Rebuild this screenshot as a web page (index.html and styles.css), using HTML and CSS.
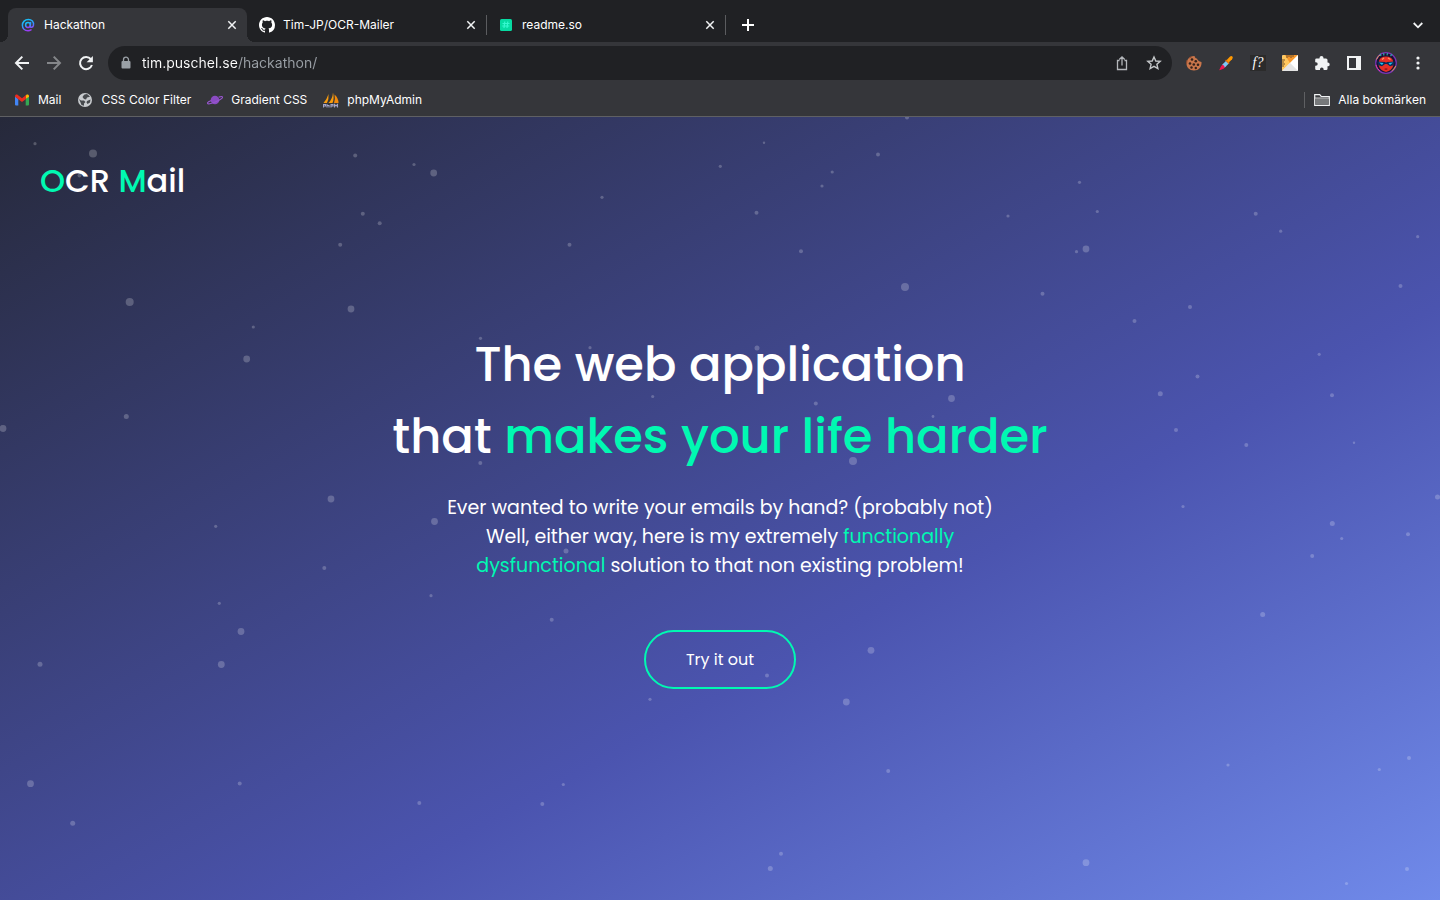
FILE: index.html
```html
<!DOCTYPE html>
<html lang="en">
<head>
<meta charset="utf-8">
<meta name="viewport" content="width=device-width, initial-scale=1">
<title>Hackathon</title>
<link rel="stylesheet" href="styles.css">
</head>
<body>
<div class="browser">
  <div class="tabstrip">
    <div class="tab tab-active">
      <svg class="icon" viewBox="0 0 16 16" fill="none" stroke="url(#at)" stroke-width="1.5" stroke-linecap="round"><defs><linearGradient id="at" x1="0" y1="0" x2="0.4" y2="1"><stop offset="0" stop-color="#12c8f4"/><stop offset=".6" stop-color="#2e9bff"/><stop offset="1" stop-color="#9b3cf5"/></linearGradient></defs><circle cx="8" cy="8" r="2.4"/><path d="M10.6 5.6 10.2 9.3c-.1 1.400 2.600 1.500 3.200-.8C14.200 4.800 11.600 2.400 8.300 2.400 5 2.400 2.400 5 2.400 8.200c0 3.200 2.400 5.500 5.600 5.500 1.200 0 2.200-.3 3-.8"/></svg>
      <span class="tab-title">Hackathon</span>
      <button class="tab-close" aria-label="Close Hackathon"><svg viewBox="0 0 16 16" fill="none" stroke="#f1f3f4" stroke-width="1.500"><path d="m4.300 4.300 7.400 7.400m0-7.400-7.400 7.400"/></svg></button>
    </div>
    <div class="tab tab-divided">
      <svg class="icon" viewBox="0 0 16 16" fill="#fff"><path d="M8 0C3.580 0 0 3.580 0 8c0 3.540 2.290 6.530 5.470 7.590.4.070.550-.170.550-.380 0-.190-.010-.820-.010-1.490-2.010.370-2.530-.490-2.690-.940-.090-.230-.480-.940-.820-1.130-.280-.150-.680-.520-.010-.530.630-.010 1.080.580 1.230.820.720 1.210 1.870.870 2.330.660.070-.520.280-.870.510-1.070-1.780-.2-3.640-.890-3.640-3.950 0-.870.310-1.590.820-2.150-.080-.2-.360-1.020.080-2.120 0 0 .670-.210 2.200.820.640-.180 1.320-.270 2-.270s1.360.090 2 .270c1.530-1.040 2.200-.820 2.200-.820.440 1.100.160 1.920.080 2.120.510.560.820 1.270.820 2.150 0 3.070-1.870 3.750-3.650 3.950.290.250.540.730.540 1.480 0 1.070-.010 1.930-.010 2.200 0 .210.150.460.550.380A8.010 8.010 0 0 0 16 8c0-4.420-3.580-8-8-8z"/></svg>
      <span class="tab-title">Tim-JP/OCR-Mailer</span>
      <button class="tab-close" aria-label="Close Tim-JP/OCR-Mailer"><svg viewBox="0 0 16 16" fill="none" stroke="#f1f3f4" stroke-width="1.500"><path d="m4.300 4.300 7.400 7.400m0-7.400-7.400 7.400"/></svg></button>
    </div>
    <div class="tab tab-divided">
      <svg class="icon" viewBox="0 0 16 16" fill="none"><rect x="2" y="2" width="12" height="12" rx="1.500" fill="#06dba2"/><path d="M6.800 4.500 6 11m3.800-6.500L9 11M4.500 6.500h7M4.200 9h7" stroke="#35f8cf" stroke-width="1.200"/></svg>
      <span class="tab-title">readme.so</span>
      <button class="tab-close" aria-label="Close readme.so"><svg viewBox="0 0 16 16" fill="none" stroke="#f1f3f4" stroke-width="1.500"><path d="m4.300 4.300 7.400 7.400m0-7.400-7.400 7.400"/></svg></button>
    </div>
    <button class="tool" aria-label="New tab"><svg class="icon" viewBox="0 0 16 16" fill="none" stroke="#fff" stroke-width="2"><path d="M8 2v12M2 8h12"/></svg></button>
    <button class="tool tab-search" aria-label="Search tabs"><svg class="icon" viewBox="0 0 16 16" fill="none" stroke="#f1f3f4" stroke-width="1.800"><path d="m3.700 6 4.300 4.300L12.300 6"/></svg></button>
  </div>

  <div class="toolbar">
    <div class="group">
      <button class="tool" aria-label="Back"><svg class="icon" viewBox="0 0 16 16" fill="none" stroke="#f1f3f4" stroke-width="2"><path d="M15 8H2.500M8.300 1.600 2 8l6.300 6.400"/></svg></button>
      <button class="tool" aria-label="Forward"><svg class="icon" viewBox="0 0 16 16" fill="none" stroke="#85878a" stroke-width="2"><path d="M1 8h12.500M7.700 1.600 14 8l-6.300 6.400"/></svg></button>
      <button class="tool" aria-label="Reload"><svg class="icon" viewBox="0 0 16 16" fill="none" stroke="#f1f3f4" stroke-width="2"><path d="M12.900 4.200A6.100 6.100 0 1 0 13.900 10"/><path d="M14.900.9v6.300H8.600z" fill="#f1f3f4" stroke="none"/></svg></button>
    </div>
    <div class="omnibox">
      <svg class="icon" viewBox="0 0 16 16"><rect x="3.500" y="6" width="9" height="7.500" rx="1" fill="#9aa0a6"/><path d="M5.500 6.500V4.700a2.500 2.500 0 0 1 5 0v1.800" fill="none" stroke="#9aa0a6" stroke-width="1.300"/></svg>
      <input class="url" type="text" aria-label="Address" value="tim.puschel.se/hackathon/">
      <button class="tool" aria-label="Share"><svg class="icon" viewBox="0 0 16 16" fill="none" stroke="#b4b7bb" stroke-width="1.300"><path d="M5.500 5.500h-2v9h9v-9h-2M8 10.500V2M5.300 4.500 8 1.800l2.700 2.700"/></svg></button>
      <button class="tool" aria-label="Bookmark this page"><svg class="icon" viewBox="0 0 16 16" fill="none" stroke="#c4c7c9" stroke-width="1.400"><path d="m8 2 1.800 4 4.400.4-3.300 2.900 1 4.300L8 11.300l-3.900 2.300 1-4.300L1.800 6.400 6.200 6z"/></svg></button>
    </div>
    <div class="group">
      <button class="tool" aria-label="Cookie editor"><svg class="icon" viewBox="0 0 16 16"><path d="M8.500 1C9 3 10 3.500 11 3.500c.5 2 2 3 4.500 3.500C16 12 12.500 15.500 8 15.500S.5 12.500.5 8.500 4 .8 8.500 1z" fill="#c9764b"/><path d="m1 5-.5 4M6 1.500 3 3" stroke="#8e4a2e"/><g fill="#33221c"><circle cx="6" cy="4.500" r="1.300"/><circle cx="9.800" cy="6.300" r="1.300"/><circle cx="4" cy="8.500" r="1.300"/><circle cx="7.800" cy="9.500" r="1.300"/><circle cx="12" cy="9.700" r="1.300"/><circle cx="5.500" cy="12.500" r="1.200"/><circle cx="9.800" cy="13" r="1.200"/></g></svg></button>
      <button class="tool" aria-label="Color picker"><svg class="icon" viewBox="0 0 16 16"><path d="M1.300 14.900 3 11.200l2.500-2.700 2.800 2.700-2.800 2.500-4 1.500z" fill="#f0174f"/><path d="m4.200 9.800 4.500-4.500 2.600 2.600-4.500 4.500q-.3-2.300-2.600-2.600z" fill="#7cc7f4"/><path d="m8.300 5.500 3.500-3.700q1.500-1.300 2.600-.2 1 1.100-.3 2.600L10.500 7.800z" fill="#ff9800"/><path d="m7.600 5 3.500 3.500" stroke="#e66e05" stroke-width="1.300"/></svg></button>
      <button class="tool" aria-label="Font finder"><span class="font-finder">f?</span></button>
      <button class="tool" aria-label="Page ruler"><svg class="icon" viewBox="0 0 16 16"><rect width="16" height="16" rx="1.500" fill="#f3f3f3"/><path d="M0 1.500Q0 0 1.500 0H16L0 16z" fill="#ffc75f"/><path d="M3 0h13L8 8z" fill="#f7972b"/><path d="M8 8 16 0v16z" fill="#fff"/><path d="M0 16 8 8l8 8z" fill="#e4e4e4"/><path d="M5 0v3m2-3v2m2-2v3m2-3v2M0 5h3M0 7h2M0 9h3M0 11h2" stroke="#70512b"/></svg></button>
      <button class="tool" aria-label="Extensions"><svg class="icon" viewBox="0 0 16 16" fill="#f1f3f4"><path d="M2.500 3.500h3V3a2 2 0 0 1 4 0v.5h2.500A1.500 1.500 0 0 1 13.500 5v2.500h.3a1.900 1.900 0 0 1 0 3.800h-.3v2.400a1.300 1.300 0 0 1-1.300 1.300H9.600v-.7a1.800 1.800 0 0 0-3.600 0v.7H2.500A1.300 1.300 0 0 1 1.200 13.700v-2.900h.7a1.800 1.800 0 0 0 0-3.600h-.7V4.800a1.300 1.300 0 0 1 1.300-1.300z"/></svg></button>
      <button class="tool" aria-label="Side panel"><svg class="icon" viewBox="0 0 16 16"><path fill="#f1f3f4" fill-rule="evenodd" d="M1 1h14v14H1zM3 3v10h7V3z"/></svg></button>
      <button class="tool" aria-label="Profile"><svg class="avatar" viewBox="0 0 22 22"><circle cx="11" cy="11" r="10.300" fill="#191332" stroke="#7a35b5" stroke-width="1.200"/><path d="M1.500 7.500A10 10 0 0 1 6 2.200M20.600 14a10 10 0 0 1-4 5" fill="none" stroke="#e3a04c"/><path d="M1 13a10 10 0 0 0 4 6" fill="none" stroke="#e53c9e"/><path d="M4 9Q5 4.500 11 4.500T18 9l.5 4Q17 18.500 11 20 5 18.500 3.500 13z" fill="#e72f26"/><path d="M6 4 5 1.800m4 1.700-.5-2.300m3.500 2.200.5-2.400m3 3L17 2.200" stroke="#2aa5a9" stroke-width="1.200"/><path d="M7 7.500 9 6m4 0 2.500 1.500" fill="none" stroke="#ff9a62" stroke-width="1.300"/><path d="M2 9.500 10 10l1 .7 1-.7 8-.5-1.500 3.700-3.500 1-3-2.200h-2l-3 2.200-3.500-1z" fill="#092c59"/><path d="m4 10.500 4.500.5-1.500 2zm14 0-4.500.5 1.500 2z" fill="#25c4f3"/><path d="m9 17 2-.7 2 .7-2 1z" fill="#80121e"/></svg></button>
      <button class="tool" aria-label="Menu"><svg class="icon" viewBox="0 0 16 16" fill="#f1f3f4"><circle cx="8" cy="3" r="1.600"/><circle cx="8" cy="8" r="1.600"/><circle cx="8" cy="13" r="1.600"/></svg></button>
    </div>
  </div>

  <nav class="bookmarks" aria-label="Bookmarks">
    <a class="bookmark" href="#"><svg class="icon" viewBox="0 0 16 16"><path d="M1 4.500 4.300 7v6.500H2a1 1 0 0 1-1-1z" fill="#4285f4"/><path d="M15 4.500 11.700 7v6.500H14a1 1 0 0 0 1-1z" fill="#34a853"/><path d="M11.700 3.500V7L15 4.700v-.5c0-1.600-1.700-2.300-2.800-1.300z" fill="#fbbc04"/><path d="M1 4.700v-.5c0-1.600 1.700-2.300 2.800-1.300L8 6.200l4.200-3.300-.5 4.300L8 10 1 4.700z" fill="#ea2d20"/></svg>Mail</a>
    <a class="bookmark" href="#"><svg class="icon" viewBox="0 0 16 16"><circle cx="8" cy="8" r="7" fill="#c8cbce"/><path d="M7.500 2.500 10 2l3 2.500-1 .5-2 .5-1 2-2-.5L5.500 5l1-1.500zM2 7l2 1.500h3L8.500 10 7 11.500v2.300L4.500 13l-1-2.500zM10 9l3.500-1.500-.5 3-2.500 1.500-1-1.500z" fill="#46494d"/></svg>CSS Color Filter</a>
    <a class="bookmark" href="#"><svg class="icon" viewBox="0 0 16 16"><circle cx="8" cy="8" r="4.300" fill="#8a4bc2"/><path d="M4.300 8.500C1.800 9.500.2 10.500.5 11.300c.5.900 4.500.1 8.300-1.500s7-3.800 6.700-4.800c-.3-.7-2-.4-3.800.1" fill="none" stroke="#9856d0" stroke-width="1.200"/></svg>Gradient CSS</a>
    <a class="bookmark" href="#"><svg class="icon" viewBox="0 0 16 16"><path d="M5.500 2Q6 7 4 11H.5Q4 7 5.500 2zM10 .5q1.500 6-.5 10.500H5.500Q9.500 7 10 .5z" fill="#f89c0e"/><path d="M11.500 2.500Q15.500 6 15.500 11H11q1.500-4 .5-8.500z" fill="#f28a0b"/><path d="M.5 15.500v-3h2v1.500H1M4 12v3.500m0-2h2v2M8 15.500v-3h2v1.500H8.500m3 1.500v-3l1.500 1.500 1.500-1.500v3" fill="none" stroke="#a3a4c7" stroke-width="1.100"/></svg>phpMyAdmin</a>
    <a class="bookmark all-bookmarks" href="#"><svg class="icon" viewBox="0 0 16 16"><path d="M.7 13.300V2.700h5l1.500 1.800h8.100v8.800z" fill="#3a3b3e" stroke="#f1f3f4" stroke-width="1.200"/><path d="M1.300 6.400h13.400v6.300H1.300z" fill="#77797b"/><path d="M.7 6h14.600" stroke="#f1f3f4" stroke-width=".8"/></svg>Alla bokmärken</a>
  </nav>
</div>

<main class="page">
  <svg class="particles" viewBox="0 117 1440 783" preserveAspectRatio="xMidYMin slice" aria-hidden="true">
    <g>
      <circle cx="93" cy="153.500" r="4"/><circle cx="129.700" cy="302" r="4"/><circle cx="905" cy="287" r="4"/><circle cx="853" cy="461" r="4"/>
      <circle cx="433.700" cy="173" r="3.400"/><circle cx="351" cy="309" r="3.400"/><circle cx="246.700" cy="359" r="3.400"/><circle cx="1086" cy="249" r="3.400"/><circle cx="3" cy="428.500" r="3.400"/><circle cx="331" cy="499" r="3.400"/><circle cx="434.500" cy="521.500" r="3.400"/><circle cx="241" cy="631.500" r="3.400"/><circle cx="221.300" cy="664.500" r="3.400"/><circle cx="30.500" cy="783.700" r="3.400"/><circle cx="951.500" cy="398.500" r="3.400"/><circle cx="871" cy="650.300" r="3.400"/><circle cx="846.300" cy="702" r="3.400"/><circle cx="1086" cy="862.700" r="3.400"/>
      <circle cx="40" cy="664.300" r="2.500"/><circle cx="72.700" cy="823.300" r="2.500"/><circle cx="1160.300" cy="393.700" r="2.500"/><circle cx="1332.300" cy="523.500" r="2.500"/><circle cx="1262.700" cy="614.500" r="2.500"/><circle cx="770.300" cy="868.500" r="2.500"/><circle cx="757" cy="348" r="2.500"/><circle cx="126.300" cy="416.500" r="2.500"/><circle cx="1437.500" cy="497" r="2.500"/><circle cx="566" cy="551" r="2.500"/><circle cx="79.500" cy="175.500" r="2"/>
      <circle cx="355.200" cy="155.500" r="2"/><circle cx="362.800" cy="213.800" r="2"/><circle cx="379.700" cy="223.200" r="2"/><circle cx="340.200" cy="244.800" r="2"/><circle cx="569.500" cy="244.800" r="2"/><circle cx="756.500" cy="212.800" r="2"/><circle cx="878" cy="154.500" r="2"/><circle cx="801" cy="251.300" r="2"/><circle cx="907" cy="117.500" r="2"/><circle cx="1255.700" cy="213.800" r="2"/><circle cx="1042.500" cy="293.800" r="2"/><circle cx="1190" cy="307" r="2"/><circle cx="1134.500" cy="321" r="2"/><circle cx="1400.500" cy="286" r="2"/><circle cx="1197.500" cy="376.500" r="2"/><circle cx="1332" cy="395.300" r="2"/><circle cx="1176" cy="430" r="2"/><circle cx="1246.300" cy="445" r="2"/><circle cx="324.300" cy="568" r="2"/><circle cx="239.700" cy="783.500" r="2"/><circle cx="419.300" cy="803" r="2"/><circle cx="551.700" cy="619.700" r="2"/><circle cx="767" cy="675.500" r="2"/><circle cx="542.300" cy="804" r="2"/><circle cx="781" cy="853.800" r="2"/><circle cx="888.200" cy="771" r="2"/><circle cx="1312.200" cy="556" r="2"/><circle cx="1408" cy="534.300" r="2"/><circle cx="1409" cy="758" r="2"/><circle cx="1407" cy="869" r="2"/><circle cx="815.800" cy="403.500" r="2"/><circle cx="480.300" cy="463" r="2"/>
      <circle cx="35" cy="143.700" r="1.600"/><circle cx="414" cy="164.500" r="1.600"/><circle cx="253.300" cy="327" r="1.600"/><circle cx="602" cy="197.300" r="1.600"/><circle cx="720.300" cy="166.300" r="1.600"/><circle cx="832.200" cy="172" r="1.600"/><circle cx="822" cy="186" r="1.600"/><circle cx="1008" cy="216" r="1.600"/><circle cx="1079.500" cy="182.300" r="1.600"/><circle cx="1097.300" cy="211.500" r="1.600"/><circle cx="1076.500" cy="251.700" r="1.600"/><circle cx="1280.700" cy="231.200" r="1.600"/><circle cx="1417.700" cy="236.700" r="1.600"/><circle cx="1319.200" cy="354.300" r="1.600"/><circle cx="480.500" cy="338.300" r="1.600"/><circle cx="590" cy="347.700" r="1.600"/><circle cx="652.700" cy="396.500" r="1.600"/><circle cx="933" cy="416.500" r="1.400"/><circle cx="215.700" cy="526.300" r="1.600"/><circle cx="219.300" cy="603.300" r="1.600"/><circle cx="431" cy="595.700" r="1.600"/><circle cx="650" cy="699.300" r="1.600"/><circle cx="563.300" cy="784.500" r="1.600"/><circle cx="1183" cy="506.500" r="1.600"/><circle cx="1341.700" cy="538.500" r="1.600"/><circle cx="1228" cy="765" r="1.600"/><circle cx="1379.300" cy="769.500" r="1.600"/><circle cx="1346.500" cy="883.500" r="1.600"/><circle cx="764" cy="142.700" r="1.200"/><circle cx="1354" cy="442.700" r="1.200"/>
    </g>
  </svg>
  <header class="site-header">
    <a class="logo" href="#"><span class="accent">O</span>CR <span class="accent">M</span>ail</a>
  </header>
  <section class="hero">
    <h1 class="headline">The web application<br>that <span class="accent">makes your life harder</span></h1>
    <p class="lead">Ever wanted to write your emails by hand? (probably not)<br>Well, either way, here is my extremely <span class="accent">functionally<br>dysfunctional</span> solution to that non existing problem!</p>
    <a class="cta" href="#">Try it out</a>
  </section>
</main>
</body>
</html>
```
FILE: styles.css
```css
* {
  box-sizing: border-box;
}

body {
  margin: 0;
  min-height: 100vh;
  display: flex;
  flex-direction: column;
  font-family: Inter, "Liberation Sans", sans-serif;
  color: #fff;
}

a {
  color: inherit;
  text-decoration: none;
}

button {
  padding: 0;
  border: 0;
  background: none;
  color: inherit;
  font: inherit;
}

svg {
  display: block;
  flex: none;
}

.icon {
  width: 16px;
  height: 16px;
}

/* Browser frame */
.browser {
  background: #35363a;
  border-bottom: 1px solid #5f6063;
  font-size: 12px;
  line-height: 16px;
}

.tabstrip {
  display: flex;
  align-items: center;
  height: 42px;
  padding: 8px 8px 0;
  background: #202124;
}

.tab {
  position: relative;
  display: flex;
  align-items: center;
  gap: 8px;
  flex: 0 1 239px;
  height: 34px;
  padding: 0 7px 0 12px;
}

.tab-active {
  background: #35363a;
  border-radius: 8px 8px 0 0;
}

.tab-active::before,
.tab-active::after {
  content: "";
  position: absolute;
  bottom: 0;
  width: 8px;
  height: 8px;
}

.tab-active::before {
  left: -8px;
  background: radial-gradient(circle at 0 0, transparent 8px, #35363a 8px);
}

.tab-active::after {
  right: -8px;
  background: radial-gradient(circle at 100% 0, transparent 8px, #35363a 8px);
}

.tab-divided::after {
  content: "";
  position: absolute;
  right: -1px;
  top: 7px;
  width: 1px;
  height: 20px;
  background: #5b5c5f;
}

.tab-title {
  flex: 1;
  min-width: 0;
  overflow: hidden;
  white-space: nowrap;
}

.tab-close {
  width: 16px;
  height: 16px;
}

.tool {
  display: flex;
  align-items: center;
  justify-content: center;
  flex: none;
  width: 28px;
  height: 28px;
}

.tabstrip > .tool {
  margin-left: 9px;
}

.tabstrip > .tab-search {
  margin-left: auto;
}

.toolbar {
  display: flex;
  align-items: center;
  gap: 8px;
  height: 42px;
  padding: 0 8px;
}

.group {
  display: flex;
  gap: 4px;
}

.omnibox {
  display: flex;
  align-items: center;
  gap: 4px;
  flex: 1;
  min-width: 0;
  height: 34px;
  padding: 0 4px 0 10px;
  border-radius: 17px;
  background: #202124;
}

.url {
  flex: 1;
  min-width: 0;
  padding: 0 0 0 4px;
  border: 0;
  outline: 0;
  background: linear-gradient(90deg, #fff 100px, #9aa0a6 100px);
  -webkit-background-clip: text;
  background-clip: text;
  color: transparent;
  font: 400 14px/20px Inter, "Liberation Sans", sans-serif;
}

.font-finder {
  width: 16px;
  height: 16px;
  background: #2b2b2b;
  font: italic 14px/15px "Liberation Serif", serif;
}

.avatar {
  width: 22px;
  height: 22px;
}

.bookmarks {
  display: flex;
  align-items: center;
  gap: 16px;
  height: 32px;
  padding: 0 14px;
}

.bookmark {
  display: flex;
  align-items: center;
  gap: 8px;
  white-space: nowrap;
}

.all-bookmarks {
  margin-left: auto;
  padding-left: 9px;
  border-left: 1px solid #5f6063;
}

/* Page */
.page {
  position: relative;
  flex: 1;
  display: grid;
  grid-template-rows: 1fr auto 1fr;
  background: linear-gradient(to bottom right, #26293a, #4b54af 62%, #708aea);
  font-family: Poppins, Inter, "Liberation Sans", sans-serif;
}

.particles {
  position: absolute;
  inset: 0;
  width: 100%;
  height: 100%;
  fill: rgba(255, 255, 255, 0.22);
}

.accent {
  color: #00f9b2;
}

.site-header {
  padding: 40px;
}

.logo {
  position: relative;
  font-size: 32px;
  font-weight: 500;
  line-height: 48px;
}

.hero {
  position: relative;
  display: flex;
  flex-direction: column;
  align-items: center;
  text-align: center;
}

.headline {
  margin: 0 0 20px;
  font-size: 48px;
  font-weight: 500;
  line-height: 72px;
}

.lead {
  margin: 0 0 50px;
  font-size: 19px;
  line-height: 29px;
}

.cta {
  padding: 16px 40px;
  border: 2px solid #00f9b2;
  border-radius: 30px;
  font-size: 16px;
  line-height: 23px;
}
```
